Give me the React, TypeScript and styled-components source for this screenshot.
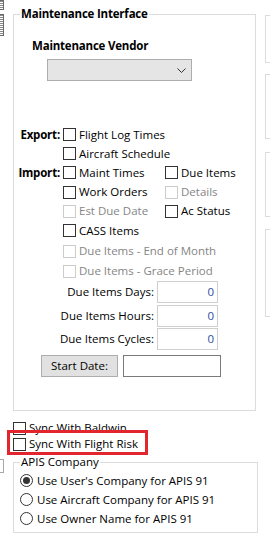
import React from 'react';
import styled, { createGlobalStyle } from 'styled-components';

const GlobalStyle = createGlobalStyle`
  html, body {
    margin: 0;
    padding: 0;
    background: #fff;
  }
  body {
    font-family: "Open Sans", "Liberation Sans", sans-serif;
    font-size: 11.5px;
    color: #000;
    overflow: hidden;
  }
`;

const Page = styled.div`
  display: flex;
  width: 270px;
  height: 539px;
  overflow: hidden;
  background: #fff;
`;

const EdgeColumn = styled.div`
  flex: none;
  width: 13px;
  display: flex;
  flex-direction: column;
`;

const EdgeStub = styled.div<{ $top: number; $height: number; $dark?: boolean }>`
  margin-top: ${p => p.$top}px;
  width: 3px;
  height: ${p => p.$height}px;
  border: 1px solid ${p => (p.$dark ? '#6a6a6a' : '#a8a8a8')};
  border-left: none;
  background: ${p =>
    p.$dark ? 'repeating-linear-gradient(0deg, #fff 0 1px, #8a8a8a 1px 2px)' : '#fff'};
`;

const Content = styled.div`
  flex: none;
  width: 252px;
  display: flex;
  flex-direction: column;
`;

const GroupBox = styled.fieldset<{ $width: number; $top: number }>`
  box-sizing: border-box;
  width: ${p => p.$width}px;
  margin: ${p => p.$top}px 0 0 0;
  padding: 0;
  min-width: 0;
  border: 1px solid #dcdcdc;
`;

const Legend = styled.legend<{ $bold?: boolean }>`
  margin-left: 6px;
  padding: 0 1px;
  line-height: 16px;
  font-weight: ${p => (p.$bold ? 700 : 400)};
  letter-spacing: ${p => (p.$bold ? '-0.2px' : '0')};
  color: #000;
`;

const MainBody = styled.div`
  display: flex;
  flex-direction: column;
  padding-bottom: 33px;
`;

const VendorLabel = styled.div`
  margin: 16px 0 0 18px;
  line-height: 16px;
  font-weight: 700;
  letter-spacing: -0.2px;
`;

const Dropdown = styled.div`
  box-sizing: border-box;
  margin: 5px 0 0 33px;
  width: 145px;
  height: 22px;
  background: #e5e5e5;
  border: 1px solid #adadad;
  display: flex;
  align-items: center;
  justify-content: flex-end;
  padding-right: 5px;
`;

const ChoiceGrid = styled.div`
  margin-top: 44px;
  display: grid;
  grid-template-columns: 49px 102px auto;
  grid-template-rows: 19px 19px 19px 20px 18px 21px 20px 20px;
  align-items: center;
`;

const SideLabel = styled.div<{ $row: number }>`
  grid-column: 1;
  grid-row: ${p => p.$row};
  text-align: right;
  padding-right: 3px;
  font-weight: 700;
  letter-spacing: -0.2px;
`;

const CheckItem = styled.label<{ $col: number; $row: number; $span?: number }>`
  grid-column: ${p => p.$col} / span ${p => p.$span || 1};
  grid-row: ${p => p.$row};
  display: flex;
  align-items: center;
  gap: 3px;
  white-space: nowrap;
`;

const Box = styled.span<{ $disabled?: boolean }>`
  box-sizing: border-box;
  flex: none;
  width: 13px;
  height: 13px;
  background: #fff;
  border: 1px solid ${p => (p.$disabled ? '#cccccc' : '#333333')};
`;

const ItemText = styled.span<{ $disabled?: boolean }>`
  line-height: 16px;
  color: ${p => (p.$disabled ? '#858585' : '#000')};
`;

const NumberGrid = styled.div`
  display: grid;
  grid-template-columns: 143px 61px;
  grid-template-rows: 24px 23px 22px;
  align-items: start;
`;

const NumberLabel = styled.div`
  height: 22px;
  line-height: 22px;
  text-align: right;
  padding-right: 3px;
`;

const NumberField = styled.div`
  box-sizing: border-box;
  height: 22px;
  border: 1px solid #cfcfcf;
  text-align: right;
  padding-right: 3px;
  line-height: 20px;
  color: #2d4f9e;
`;

const StartRow = styled.div`
  margin: 5px 0 0 27px;
  display: flex;
  gap: 5px;
`;

const StartButton = styled.div`
  box-sizing: border-box;
  width: 77px;
  height: 22px;
  background: #e1e1e1;
  border: 1px solid #adadad;
  text-align: center;
  line-height: 20px;
`;

const DateField = styled.div`
  box-sizing: border-box;
  width: 98px;
  height: 22px;
  border: 1px solid #7a7a7a;
  background: #fff;
`;

const SyncRow = styled.label<{ $top: number; $marked?: boolean }>`
  position: relative;
  margin-top: ${p => p.$top}px;
  height: 16px;
  display: flex;
  align-items: center;
  gap: 3px;

  ${p =>
    p.$marked &&
    `
    &::after {
      content: '';
      position: absolute;
      left: -6px;
      top: -6px;
      width: 141px;
      height: 25px;
      box-sizing: border-box;
      border: 3px solid #e3262d;
      pointer-events: none;
    }
  `}
`;

const RadioList = styled.div`
  display: flex;
  flex-direction: column;
  padding: 1px 0 4px 6px;
`;

const RadioRow = styled.label`
  height: 19px;
  display: flex;
  align-items: center;
  gap: 4px;
`;

const RadioCircle = styled.span<{ $checked?: boolean }>`
  box-sizing: border-box;
  flex: none;
  width: 13px;
  height: 13px;
  border-radius: 50%;
  border: 1px solid #333;
  display: flex;
  align-items: center;
  justify-content: center;

  &::after {
    content: '';
    width: 7px;
    height: 7px;
    border-radius: 50%;
    background: ${p => (p.$checked ? '#333' : 'transparent')};
  }
`;

const RightStrip = styled.div`
  flex: none;
  display: flex;
  flex-direction: column;
`;

const StubPanel = styled.div<{ $top: number; $height: number }>`
  box-sizing: border-box;
  margin-top: ${p => p.$top}px;
  width: 20px;
  height: ${p => p.$height}px;
  border: 1px solid #dcdcdc;
`;

const Chevron = () => (
  <svg width="9" height="5" viewBox="0 0 9 5">
    <polyline points="0.5,0.5 4.5,4.5 8.5,0.5" fill="none" stroke="#333" strokeWidth="1" />
  </svg>
);

const Check: React.FC<{ col: number; row: number; span?: number; disabled?: boolean; text: string }> = ({
  col,
  row,
  span,
  disabled,
  text,
}) => (
  <CheckItem $col={col} $row={row} $span={span}>
    <Box $disabled={disabled} />
    <ItemText $disabled={disabled}>{text}</ItemText>
  </CheckItem>
);

const numberFields = ['Due Items Days:', 'Due Items Hours:', 'Due Items Cycles:'];

const apisOptions = [
  { text: "Use User's Company for APIS 91", checked: true },
  { text: 'Use Aircraft Company for APIS 91', checked: false },
  { text: 'Use Owner Name for APIS 91', checked: false },
];

const App: React.FC = () => {
  return (
    <Page>
      <GlobalStyle />
      <EdgeColumn>
        <EdgeStub $top={0} $height={8} $dark />
        <EdgeStub $top={4} $height={20} $dark />
        <EdgeStub $top={423} $height={12} />
      </EdgeColumn>

      <Content>
        <GroupBox $width={243} $top={6}>
          <Legend $bold>Maintenance Interface</Legend>
          <MainBody>
            <VendorLabel>Maintenance Vendor</VendorLabel>
            <Dropdown>
              <Chevron />
            </Dropdown>

            <ChoiceGrid>
              <SideLabel $row={1}>Export:</SideLabel>
              <Check col={2} row={1} span={2} text="Flight Log Times" />
              <Check col={2} row={2} span={2} text="Aircraft Schedule" />
              <SideLabel $row={3}>Import:</SideLabel>
              <Check col={2} row={3} text="Maint Times" />
              <Check col={3} row={3} text="Due Items" />
              <Check col={2} row={4} text="Work Orders" />
              <Check col={3} row={4} text="Details" disabled />
              <Check col={2} row={5} text="Est Due Date" disabled />
              <Check col={3} row={5} text="Ac Status" />
              <Check col={2} row={6} span={2} text="CASS Items" />
              <Check col={2} row={7} span={2} text="Due Items - End of Month" disabled />
              <Check col={2} row={8} span={2} text="Due Items - Grace Period" disabled />
            </ChoiceGrid>

            <NumberGrid>
              {numberFields.map(label => (
                <React.Fragment key={label}>
                  <NumberLabel>{label}</NumberLabel>
                  <NumberField>0</NumberField>
                </React.Fragment>
              ))}
            </NumberGrid>

            <StartRow>
              <StartButton>Start Date:</StartButton>
              <DateField />
            </StartRow>
          </MainBody>
        </GroupBox>

        <SyncRow $top={9}>
          <Box />
          <ItemText>Sync With Baldwin</ItemText>
        </SyncRow>
        <SyncRow $top={0} $marked>
          <Box />
          <ItemText>Sync With Flight Risk</ItemText>
        </SyncRow>

        <GroupBox $width={245} $top={2}>
          <Legend>APIS Company</Legend>
          <RadioList>
            {apisOptions.map(o => (
              <RadioRow key={o.text}>
                <RadioCircle $checked={o.checked} />
                <ItemText>{o.text}</ItemText>
              </RadioRow>
            ))}
          </RadioList>
        </GroupBox>
      </Content>

      <RightStrip>
        <StubPanel $top={15} $height={48} />
        <StubPanel $top={11} $height={65} />
        <StubPanel $top={13} $height={65} />
        <StubPanel $top={12} $height={88} />
      </RightStrip>
    </Page>
  );
};

export default App;
